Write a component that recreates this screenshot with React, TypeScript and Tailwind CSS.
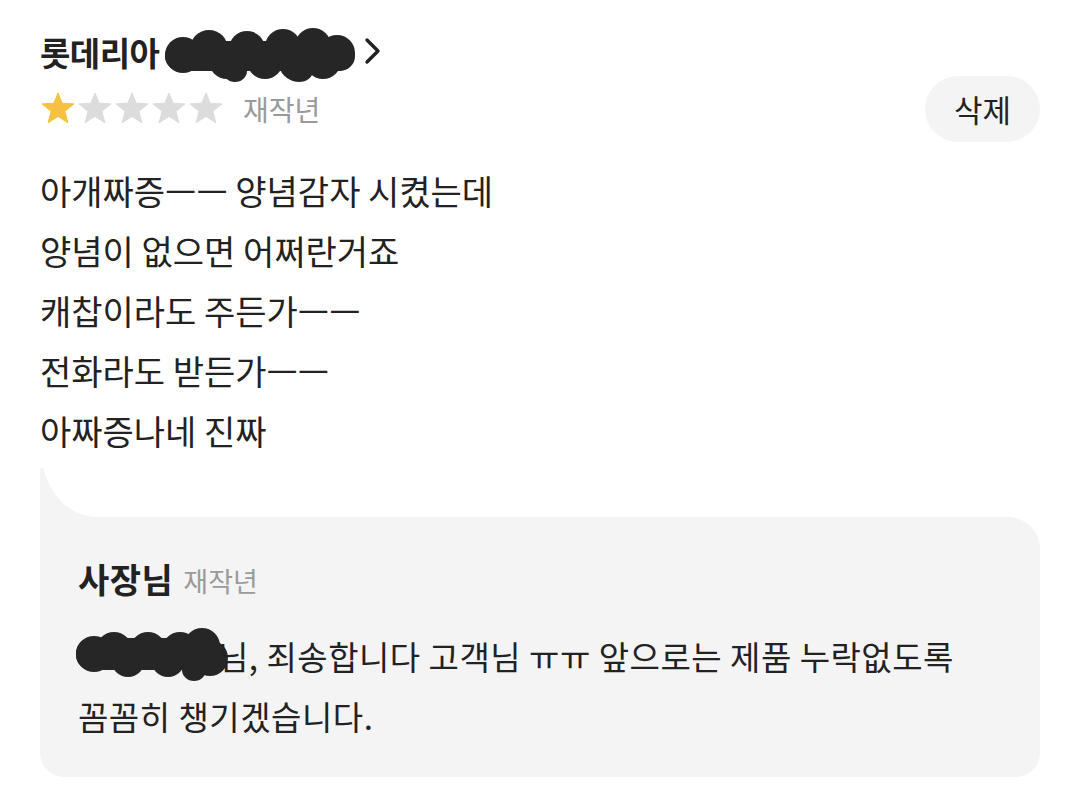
import React from "react";

const font = { fontFamily: '"Noto Sans CJK KR", "Noto Sans", sans-serif' };

function Star({ color }: { color: string }) {
  return (
    <svg width="34" height="32" viewBox="0 0 34 32" className="block">
      <path
        d="M17 1 L21.2 11.2 L33 11.9 L23.9 19.3 L26.9 30.8 L17 24.4 L7.1 30.8 L10.1 19.3 L1 11.9 L12.8 11.2 Z"
        fill={color}
        stroke={color}
        strokeWidth="1"
        strokeLinejoin="round"
      />
    </svg>
  );
}

function TitleScribble() {
  return (
    <svg width="194" height="56" viewBox="0 0 194 56" className="block">
      <g fill="#262626">
        <rect x="2" y="14" width="190" height="30" rx="15" />
        <circle cx="20" cy="28" r="18" />
        <circle cx="46" cy="22" r="19" />
        <circle cx="64" cy="34" r="18" />
        <circle cx="84" cy="22" r="18" />
        <circle cx="102" cy="34" r="18" />
        <circle cx="120" cy="20" r="18" />
        <circle cx="134" cy="36" r="18" />
        <circle cx="150" cy="19" r="18" />
        <circle cx="160" cy="34" r="18" />
        <circle cx="174" cy="26" r="18" />
        <ellipse cx="72" cy="44" rx="12" ry="11" />
        <ellipse cx="136" cy="44" rx="14" ry="11" />
      </g>
    </svg>
  );
}

function ReplyScribble() {
  return (
    <svg width="156" height="56" viewBox="0 0 156 56" className="block">
      <g fill="#262626">
        <rect x="2" y="12" width="140" height="32" rx="15" />
        <circle cx="20" cy="28" r="18" />
        <circle cx="40" cy="24" r="18" />
        <circle cx="54" cy="34" r="17" />
        <circle cx="74" cy="24" r="18" />
        <circle cx="94" cy="34" r="17" />
        <circle cx="106" cy="24" r="18" />
        <circle cx="128" cy="20" r="18" />
        <circle cx="136" cy="32" r="18" />
        <ellipse cx="120" cy="44" rx="12" ry="11" />
      </g>
    </svg>
  );
}

export default function App() {
  return (
    <div className="w-[1080px] h-[789px] bg-white text-[#222] overflow-hidden" style={font}>
      <div className="pl-[40px] pr-[40px] pt-[28px] flex flex-col">
        <div className="flex items-center h-[48px]">
          <span className="text-[33px] font-bold leading-[48px] tracking-[-0.5px]">롯데리아</span>
          <div className="ml-[4px] mt-[6px]">
            <TitleScribble />
          </div>
          <svg width="22" height="28" viewBox="0 0 22 28" className="ml-[6px] -mt-[2px]">
            <polyline points="4,3 15,14 4,25" fill="none" stroke="#222" strokeWidth="3.4" strokeLinecap="round" strokeLinejoin="round" />
          </svg>
        </div>
        <div className="flex items-center justify-between h-[66px]">
          <div className="flex items-center">
            <div className="flex items-center gap-[3px] ml-[1px] -mt-[2px]">
              <Star color="#f6c143" />
              <Star color="#dcdcdc" />
              <Star color="#dcdcdc" />
              <Star color="#dcdcdc" />
              <Star color="#dcdcdc" />
            </div>
            <span className="ml-[20px] text-[28px] text-[#9a9a9a] leading-none">재작년</span>
          </div>
          <button className="w-[115px] h-[66px] rounded-full bg-[#f4f4f4] text-[31px] text-[#222] flex items-center justify-center">
            삭제
          </button>
        </div>
        <div className="mt-[19px] text-[34px] leading-[60px]">
          <div>아개짜증ㅡㅡ 양념감자 시켰는데</div>
          <div>양념이 없으면 어쩌란거죠</div>
          <div>캐찹이라도 주든가ㅡㅡ</div>
          <div>전화라도 받든가ㅡㅡ</div>
          <div>아짜증나네 진짜</div>
        </div>
        <svg width="70" height="50" viewBox="0 0 70 50" className="mt-[6px] block">
          <path d="M0 4 Q0 0 3 1 Q18 50 60 50 L70 50 L70 50 L0 50 Z" fill="#f4f4f4" />
        </svg>
        <div className="bg-[#f4f4f4] rounded-tr-[32px] rounded-b-[24px] pl-[38px] pr-[38px] pt-[42px] pb-[31px]">
          <div className="flex items-end h-[40px]">
            <span className="text-[34px] font-bold leading-[40px] tracking-[0.5px]">사장님</span>
            <span className="ml-[10px] text-[27px] text-[#9a9a9a] leading-[36px]">재작년</span>
          </div>
          <div className="mt-[27px] text-[33px] leading-[60px] tracking-[0.5px]">
            <div className="flex items-center">
              <div className="-ml-[4px] mr-[-12px] -mt-[4px]">
                <ReplyScribble />
              </div>
              <span>님, 죄송합니다 고객님 ㅠㅠ 앞으로는 제품 누락없도록</span>
            </div>
            <div>꼼꼼히 챙기겠습니다.</div>
          </div>
        </div>
      </div>
    </div>
  );
}
